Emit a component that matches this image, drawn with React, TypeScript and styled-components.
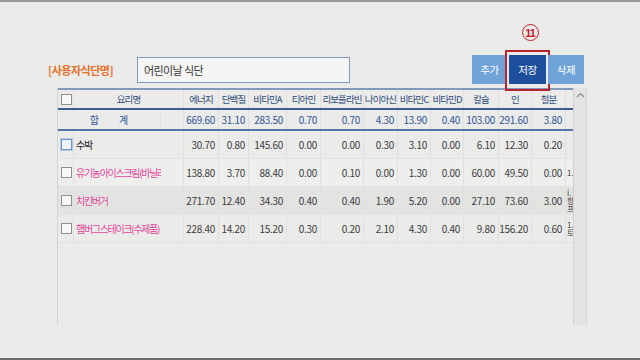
import React from "react";
import styled, { createGlobalStyle } from "styled-components";

const Global = createGlobalStyle`
  html, body { margin: 0; padding: 0; background: #ebebea; }
  body { font-family: "Noto Sans CJK KR", "Noto Sans", sans-serif; }
`;

const COLS = "16px 87px 23px 35px 30px 38px 34px 43px 34px 33px 33px 35px 33px 34px 8px";

const Page = styled.div`
  width: 640px;
  height: 360px;
  box-sizing: border-box;
  background: #ebebea;
  border-top: 2px solid #999998;
  border-bottom: 2px solid #6d6d6d;
  display: flex;
  flex-direction: column;
  overflow: hidden;
`;

const Toolbar = styled.div`
  display: flex;
  align-items: center;
  height: 29px;
  margin-top: 53px;
  padding-left: 48px;
  padding-right: 56px;
`;

const Label = styled.span`
  font-size: 11px;
  font-weight: 700;
  letter-spacing: -0.5px;
  color: #e8702a;
  width: 67px;
  white-space: nowrap;
`;

const NameInput = styled.div`
  margin-left: 22px;
  width: 213px;
  height: 26px;
  box-sizing: border-box;
  border: 1px solid #7f9cc0;
  background: #f5f5f4;
  font-size: 11px;
  letter-spacing: -0.6px;
  color: #333;
  padding-left: 6px;
  display: flex;
  align-items: center;
`;

const Spacer = styled.div`
  flex: 1;
`;

const Buttons = styled.div`
  display: flex;
  gap: 2px;
  height: 29px;
`;

const Btn = styled.div<{ $dark?: boolean; $w: number }>`
  position: relative;
  width: ${(p) => p.$w}px;
  height: 29px;
  background: ${(p) => (p.$dark ? "#1d4f9c" : "#70a4d9")};
  color: #fff;
  font-size: 10.5px;
  letter-spacing: -0.5px;
  display: flex;
  align-items: center;
  justify-content: center;
`;

const Highlight = styled.div`
  position: absolute;
  left: -4px;
  right: -4px;
  top: -5px;
  bottom: -7px;
  border: 2px solid #b5242c;
  pointer-events: none;
`;

const Marker = styled.div`
  position: absolute;
  left: 13px;
  top: -31px;
  width: 17px;
  height: 17px;
  box-sizing: border-box;
  border: 1.6px solid #c8202a;
  border-radius: 50%;
  color: #c8202a;
  font-family: "Liberation Sans", Arial, sans-serif;
  font-weight: 700;
  font-size: 11px;
  letter-spacing: -1px;
  display: flex;
  align-items: center;
  justify-content: center;
  padding-right: 1px;
`;

const TableWrap = styled.div`
  display: flex;
  margin-top: 4px;
  margin-left: 57px;
  height: 237px;
`;

const Grid = styled.div`
  width: 516px;
  display: flex;
  flex-direction: column;
  border-left: 1px solid #d2d2d2;
  box-sizing: border-box;
`;

const Row = styled.div<{ $h: number; $bg?: string; $bottom?: string; $top?: string }>`
  display: grid;
  grid-template-columns: ${COLS};
  height: ${(p) => p.$h}px;
  box-sizing: border-box;
  background: ${(p) => p.$bg || "transparent"};
  border-bottom: ${(p) => p.$bottom || "1px solid #e1e1e0"};
  border-top: ${(p) => p.$top || "none"};
`;

const Cell = styled.div<{ $align?: string; $color?: string; $span?: number; $noBorder?: boolean }>`
  ${(p) => (p.$span ? `grid-column: span ${p.$span};` : "")}
  display: flex;
  align-items: center;
  justify-content: ${(p) => p.$align || "flex-end"};
  padding: 0 3px;
  box-sizing: border-box;
  overflow: hidden;
  white-space: nowrap;
  font-size: 10px;
  letter-spacing: -0.3px;
  color: ${(p) => p.$color || "#3d3d3d"};
  border-right: ${(p) => (p.$noBorder ? "none" : "1px solid #e0e0df")};
`;

const HeadCell = styled(Cell)`
  justify-content: center;
  padding: 0;
  font-size: 9.5px;
  letter-spacing: -0.9px;
  color: #2f4d7c;
`;

const SumLabel = styled(HeadCell)`
  font-size: 10px;
  letter-spacing: 0;
  word-spacing: 18px;
  color: #2f5597;
`;

const NameCell = styled(Cell)`
  justify-content: flex-start;
  padding: 0 0 0 2px;
  font-size: 10px;
  letter-spacing: -1.3px;
  overflow: hidden;
  text-overflow: clip;
`;

const CheckCell = styled.div`
  display: flex;
  align-items: center;
  justify-content: center;
  padding-left: 2px;
  border-right: 1px solid #e0e0df;
`;

const Box = styled.span<{ $focus?: boolean }>`
  width: 9px;
  height: 9px;
  border: 1px solid ${(p) => (p.$focus ? "#6f93c2" : "#8f8f8f")};
  background: ${(p) => (p.$focus ? "#eef3f9" : "#f8f8f8")};
  box-shadow: ${(p) => (p.$focus ? "0 0 0 1px #b7cbe4" : "none")};
`;

const Wrap = styled.div`
  display: flex;
  align-items: center;
  overflow: hidden;
  font-size: 8px;
  line-height: 8px;
  color: #444;
  word-break: break-all;
  white-space: normal;
  width: 8px;
  padding-left: 1px;
  box-sizing: border-box;
`;

const Filler = styled.div`
  flex: 1;
`;

const Scroll = styled.div`
  width: 14px;
  background: #e3e3e2;
  border-left: 1px solid #d2d2d2;
  border-right: 1px solid #d8d8d8;
  box-sizing: border-box;
  display: flex;
  justify-content: center;
  padding-top: 4px;
`;

const headers = ["에너지", "단백질", "비타민A", "티아민", "리보플라빈", "나이아신", "비타민C", "비타민D", "칼슘", "인", "철분"];
const sums = ["669.60", "31.10", "283.50", "0.70", "0.70", "4.30", "13.90", "0.40", "103.00", "291.60", "3.80"];

const rows = [
  { name: "수박", color: "#1e1e1e", vals: ["30.70", "0.80", "145.60", "0.00", "0.00", "0.30", "3.10", "0.00", "6.10", "12.30", "0.20"], extra: "", focus: true, bg: "transparent" },
  { name: "유기농아이스크림(바닐라)", color: "#e2479b", vals: ["138.80", "3.70", "88.40", "0.00", "0.10", "0.00", "1.30", "0.00", "60.00", "49.50", "0.00"], extra: "1.", bg: "#eeeeed" },
  { name: "치킨버거", color: "#e2479b", vals: ["271.70", "12.40", "34.30", "0.40", "0.40", "1.90", "5.20", "0.00", "27.10", "73.60", "3.00"], extra: "i.향프", bg: "#e3e3e2" },
  { name: "햄버그스테이크(수제품)", color: "#e2479b", vals: ["228.40", "14.20", "15.20", "0.30", "0.20", "2.10", "4.30", "0.40", "9.80", "156.20", "0.60"], extra: "1.토", bg: "#ebebea" },
];

export default function App() {
  return (
    <Page>
      <Global />
      <Toolbar>
        <Label>[사용자식단명]</Label>
        <NameInput>어린이날 식단</NameInput>
        <Spacer />
        <Buttons>
          <Btn $w={35}>추가</Btn>
          <Btn $w={37} $dark>
            저장
            <Highlight />
            <Marker>11</Marker>
          </Btn>
          <Btn $w={36}>삭제</Btn>
        </Buttons>
      </Toolbar>
      <TableWrap>
        <Grid>
          <Row $h={22} $top="2px solid #8399bb" $bottom="2px solid #3d5c92">
            <CheckCell>
              <Box />
            </CheckCell>
            <HeadCell $span={2}>요리명</HeadCell>
            {headers.map((h) => (
              <HeadCell key={h}>{h}</HeadCell>
            ))}
            <HeadCell $noBorder />
          </Row>
          <Row $h={21} $bottom="2px solid #5575a9">
            <SumLabel $span={2}>합 계</SumLabel>
            <Cell />
            {sums.map((s, i) => (
              <Cell key={i} $color="#2f5597">
                {s}
              </Cell>
            ))}
            <Cell $noBorder />
          </Row>
          {rows.map((r) => (
            <Row key={r.name} $h={28} $bg={r.bg}>
              <CheckCell>
                <Box $focus={r.focus} />
              </CheckCell>
              <NameCell $color={r.color} $noBorder>
                {r.name}
              </NameCell>
              <Cell />
              {r.vals.map((v, i) => (
                <Cell key={i}>{v}</Cell>
              ))}
              <Wrap>{r.extra}</Wrap>
            </Row>
          ))}
          <Filler />
        </Grid>
        <Scroll>
          <svg width="9" height="6" viewBox="0 0 9 6">
            <path d="M1 5 L4.5 1.5 L8 5" fill="none" stroke="#8a8a8a" strokeWidth="1.2" />
          </svg>
        </Scroll>
      </TableWrap>
    </Page>
  );
}
